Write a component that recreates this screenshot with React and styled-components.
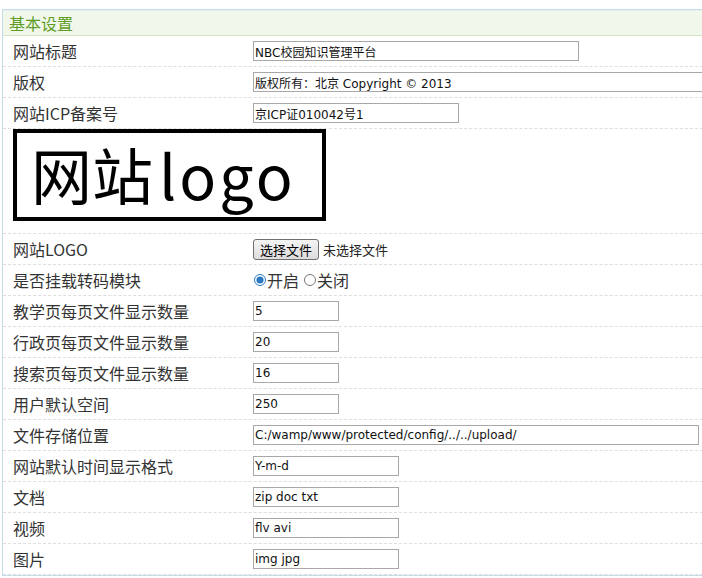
import React from "react";
import styled, { createGlobalStyle } from "styled-components";

//* Global
const GlobalStyle = createGlobalStyle`
  html, body {
    margin: 0;
    padding: 0;
    overflow: hidden;
    background: #fff;
  }
  body {
    font-family: "Noto Sans CJK SC", "Noto Sans", sans-serif;
  }
`;

//* Style
const Page = styled.div`
  padding: 9px 0 0 2px;
`;

const Panel = styled.div`
  width: 740px;
  border: 1px solid #c6dbe8;
  border-right: none;
`;

const Header = styled.div`
  height: 24px;
  border-top: 1px solid #e6eff4;
  border-bottom: 1px solid #d7e6c6;
  background: #f1f7eb;
  color: #5e9d25;
  font-size: 16px;
  line-height: 24px;
  padding-left: 6px;
`;

const Row = styled.div`
  display: grid;
  grid-template-columns: 250px 1fr;
  align-items: ${(p) => (p.$tall ? "start" : "center")};
  height: ${(p) => (p.$tall ? 104 : 30)}px;
  border-bottom: 1px dashed #dedede;
`;

const Label = styled.div`
  padding-left: 10px;
  font-size: 16px;
  line-height: 20px;
  color: #333;
  white-space: nowrap;
`;

const Field = styled.div`
  display: flex;
  align-items: center;
  gap: 4px;
`;

const TextInput = styled.input`
  box-sizing: border-box;
  width: ${(p) => p.$w}px;
  height: 20px;
  margin: 0;
  padding: 0 1px;
  border: 1px solid #a8a8a8;
  font-family: "DejaVu Sans", "Noto Sans CJK SC", sans-serif;
  font-size: 12px;
  color: #111;
  outline: none;
`;

const LogoBox = styled.div`
  box-sizing: border-box;
  width: 313px;
  height: 92px;
  margin-left: 10px;
  border: 4px solid #000;
  padding: 0 0 4px 14px;
  display: flex;
  align-items: center;
  font-family: "Noto Sans CJK SC", sans-serif;
  font-size: 61px;
  line-height: 1;
  color: #000;
`;

const LogoLatin = styled.span`
  margin-left: 6px;
  letter-spacing: 3px;
`;

const FileButton = styled.button`
  height: 21px;
  padding: 0 6px;
  border: 1px solid #707070;
  border-radius: 3px;
  background: linear-gradient(#f4f4f4, #dcdcdc);
  font-family: "Noto Sans CJK SC", sans-serif;
  font-size: 13px;
  line-height: 17px;
  color: #000;
`;

const FileHint = styled.span`
  font-size: 13px;
  color: #222;
`;

const RadioLabel = styled.label`
  display: flex;
  align-items: center;
  font-size: 16px;
  color: #333;
`;

const Radio = styled.input`
  width: 12px;
  height: 12px;
  margin: 0 1px 0 1px;
  accent-color: #2a78c4;
`;

//* Data
const textFields = [
  { label: "网站标题", value: "NBC校园知识管理平台", width: 326 },
  { label: "版权", value: "版权所有：北京 Copyright © 2013", width: 470 },
  { label: "网站ICP备案号", value: "京ICP证010042号1", width: 206 },
];

const moreFields = [
  { label: "教学页每页文件显示数量", value: "5", width: 86 },
  { label: "行政页每页文件显示数量", value: "20", width: 86 },
  { label: "搜索页每页文件显示数量", value: "16", width: 86 },
  { label: "用户默认空间", value: "250", width: 86 },
  { label: "文件存储位置", value: "C:/wamp/www/protected/config/../../upload/", width: 446 },
  { label: "网站默认时间显示格式", value: "Y-m-d", width: 146 },
  { label: "文档", value: "zip doc txt", width: 146 },
  { label: "视频", value: "flv avi", width: 146 },
  { label: "图片", value: "img jpg", width: 146 },
];

//* JSX
function TextRow({ label, value, width }) {
  return (
    <Row>
      <Label>{label}</Label>
      <Field>
        <TextInput type="text" defaultValue={value} $w={width} />
      </Field>
    </Row>
  );
}

function App() {
  return (
    <Page>
      <GlobalStyle />
      <Panel>
        <Header>基本设置</Header>
        {textFields.map((f) => (
          <TextRow key={f.label} {...f} />
        ))}
        <Row $tall>
          <LogoBox>
            网站<LogoLatin>logo</LogoLatin>
          </LogoBox>
        </Row>
        <Row>
          <Label>网站LOGO</Label>
          <Field>
            <FileButton type="button">选择文件</FileButton>
            <FileHint>未选择文件</FileHint>
          </Field>
        </Row>
        <Row>
          <Label>是否挂载转码模块</Label>
          <Field>
            <RadioLabel>
              <Radio type="radio" name="transcode" defaultChecked />
              开启
            </RadioLabel>
            <RadioLabel>
              <Radio type="radio" name="transcode" />
              关闭
            </RadioLabel>
          </Field>
        </Row>
        {moreFields.map((f) => (
          <TextRow key={f.label} {...f} />
        ))}
      </Panel>
    </Page>
  );
}

export default App;
